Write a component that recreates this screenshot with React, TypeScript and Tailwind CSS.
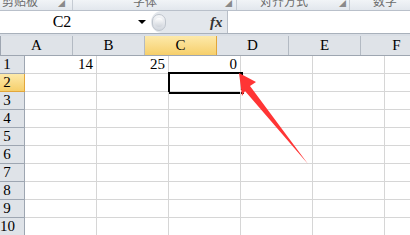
import React from 'react';

const cols = ['A', 'B', 'C', 'D', 'E', 'F'];
const rows = [1, 2, 3, 4, 5, 6, 7, 8, 9, 10];
const values: Record<string, string> = { A1: '14', B1: '25', C1: '0' };

function App() {
  return (
    <div className="relative w-[410px] h-[235px] overflow-hidden bg-white [font-family:'Liberation_Serif',serif] text-black">
      {/* ribbon strip, cut off at the top */}
      <div className="flex h-[11px] border-b border-[#b9c0ca] bg-gradient-to-b from-[#f1f4f7] to-[#e2e7ed] [font-family:'Noto_Sans_CJK_SC',sans-serif] text-[12px] text-[#6b6b6b] overflow-hidden">
        <div className="relative w-[73px] border-r border-[#c5cbd3] overflow-hidden">
          <span className="absolute left-[2px] top-[-5px] leading-none">剪贴板</span>
          <span className="absolute left-[58px] top-0 text-[7px] leading-none text-[#8a8a8a]">◢</span>
        </div>
        <div className="relative w-[164px] border-r border-[#c5cbd3] overflow-hidden">
          <span className="absolute left-[60px] top-[-5px] leading-none">字体</span>
          <span className="absolute left-[152px] top-0 text-[7px] leading-none text-[#8a8a8a]">◢</span>
        </div>
        <div className="relative w-[113px] border-r border-[#c5cbd3] overflow-hidden">
          <span className="absolute left-[23px] top-[-5px] leading-none">对齐方式</span>
          <span className="absolute left-[102px] top-0 text-[7px] leading-none text-[#8a8a8a]">◢</span>
        </div>
        <div className="relative flex-1 overflow-hidden">
          <span className="absolute left-[23px] top-[-5px] leading-none">数字</span>
        </div>
      </div>

      {/* formula bar */}
      <div className="flex h-[23px] border-b border-[#a9b1bb] bg-white">
        <div className="flex w-[151px] items-center">
          <div className="w-[124px] text-center [font-family:'Liberation_Serif',serif] text-[16px] leading-none">C2</div>
          <div className="ml-[14px] h-0 w-0 border-l-[4px] border-r-[4px] border-t-[4px] border-l-transparent border-r-transparent border-t-black" />
        </div>
        <div className="flex w-[77px] items-center rounded-l-full border-r border-[#b8bec7] bg-[#e3e7ec]">
          <div className="ml-[1px] flex h-[17px] w-[14px] items-center justify-center rounded-full border border-[#bfc5cd] bg-gradient-to-b from-[#f6f7f9] to-[#d3d8df]">
            <div className="h-[9px] w-[8px] rounded-full bg-gradient-to-b from-[#ffffff] to-[#cfd4db]" />
          </div>
          <span className="ml-[44px] [font-family:'Liberation_Serif',serif] text-[15px] font-bold italic leading-none text-[#333]">fx</span>
        </div>
        <div className="flex-1 bg-white" />
      </div>

      <div className="h-[2px] bg-[#d9dee5]" />

      {/* column headers */}
      <div className="flex h-[20px] border-b border-[#9ea6b1] text-[15px]">
        <div className="relative w-[25px] border-r border-[#9ea6b1] bg-[#dfe3e8]">
          <div className="absolute bottom-[2px] right-[2px] h-0 w-0 border-b-[9px] border-l-[9px] border-b-[#b7bcc3] border-l-transparent" />
        </div>
        {cols.map(c =>
          c === 'C' ? (
            <div key={c} className="flex w-[72px] shrink-0 items-center justify-center border-r border-[#e2a63a] bg-gradient-to-b from-[#fde9a9] to-[#f6cf6a] leading-none">
              {c}
            </div>
          ) : (
            <div key={c} className="flex w-[72px] shrink-0 items-center justify-center border-r border-[#b3bac3] bg-[#dfe3e8] leading-none">
              {c}
            </div>
          )
        )}
      </div>

      {/* rows */}
      {rows.map(r => (
        <div key={r} className="flex h-[18px]">
          {r === 2 ? (
            <div className="flex w-[25px] shrink-0 items-end border-r border-b border-[#e2a63a] bg-gradient-to-b from-[#fde9a9] to-[#f6cf6a] pr-[10px] text-[15px] leading-none">
              <span className="w-full pb-[1px] text-center">{r}</span>
            </div>
          ) : (
            <div className="flex w-[25px] shrink-0 items-end border-r border-b border-[#9ea6b1] bg-[#dfe3e8] pr-[10px] text-[15px] leading-none">
              <span className="w-full pb-[1px] text-center">{r}</span>
            </div>
          )}
          {cols.map(c => (
            <div key={c} className="relative flex w-[72px] shrink-0 items-end justify-end border-r border-b border-[#d6d6d6] pr-[3px] pb-[1px] text-[15px] leading-none">
              {values[c + r] ?? ''}
              {c === 'C' && r === 2 && (
                <>
                  <div className="absolute left-[-1px] top-[-2px] h-[22px] w-[75px] border-2 border-black" />
                  <div className="absolute left-[71px] top-[16px] h-[5px] w-[5px] border border-white bg-black" />
                </>
              )}
            </div>
          ))}
        </div>
      ))}

      {/* red arrow pointing at C1 */}
      <svg className="pointer-events-none absolute left-0 top-0" width="410" height="235" viewBox="0 0 410 235">
        <polygon points="239,73 256,82 250,86 308,164 245,91 242,96" fill="#ff3535" />
      </svg>
    </div>
  );
}

export default App;
